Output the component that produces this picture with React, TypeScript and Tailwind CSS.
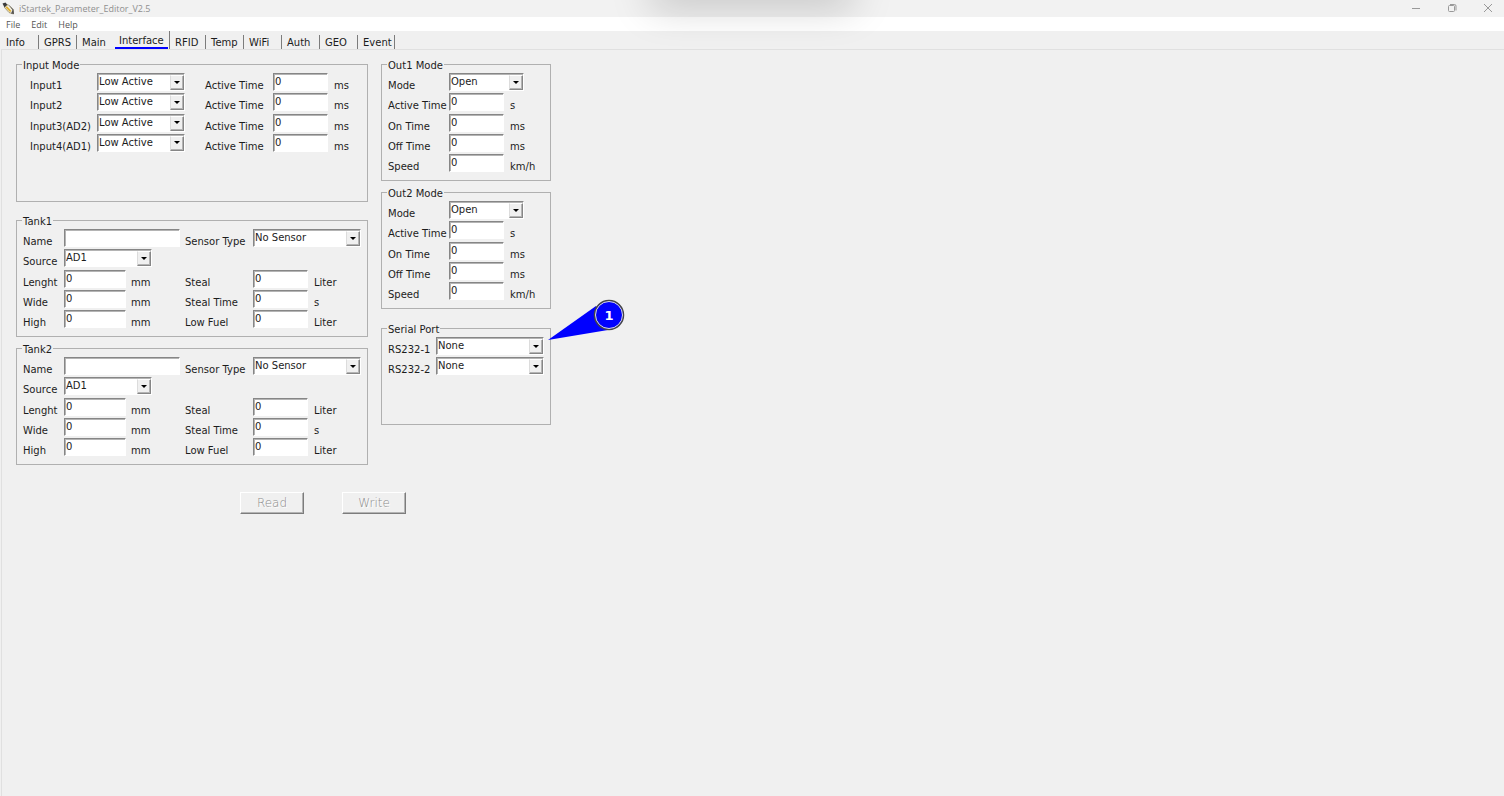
import type { ReactNode } from "react";

const TABS = [
  { label: "Info", width: "w-[38px]" },
  { label: "GPRS", width: "w-[38px]" },
  { label: "Main", width: "w-[38px]" },
  { label: "Interface", width: "w-[55px]" },
  { label: "RFID", width: "w-[36px]" },
  { label: "Temp", width: "w-[38px]" },
  { label: "WiFi", width: "w-[38px]" },
  { label: "Auth", width: "w-[38px]" },
  { label: "GEO", width: "w-[38px]" },
  { label: "Event", width: "w-[37px]" },
];

const INPUTS = ["Input1", "Input2", "Input3(AD2)", "Input4(AD1)"];

const OUT_FIELDS = [
  { label: "Active Time", unit: "s" },
  { label: "On Time", unit: "ms" },
  { label: "Off Time", unit: "ms" },
  { label: "Speed", unit: "km/h" },
];

const TANK_FIELDS = [
  { left: "Lenght", right: "Steal", unit: "Liter" },
  { left: "Wide", right: "Steal Time", unit: "s" },
  { left: "High", right: "Low Fuel", unit: "Liter" },
];

function Label({ htmlFor, children }: { htmlFor?: string; children: ReactNode }) {
  return (
    <label htmlFor={htmlFor} className="mt-1 h-[18px] leading-[18px] whitespace-nowrap">
      {children}
    </label>
  );
}

function Unit({ children }: { children: ReactNode }) {
  return <span className="mt-1 h-[18px] leading-[18px]">{children}</span>;
}

function TextBox({ id, width, value = "0" }: { id: string; width: string; value?: string }) {
  return (
    <input
      id={id}
      defaultValue={value}
      className={`${width} block h-[18px] border border-t-[#868686] border-r-white border-b-white border-l-[#868686] bg-white pb-px pl-px leading-[14px] shadow-[inset_1px_1px_0_#b4b4b4] outline-none`}
    />
  );
}

function Select({ id, width, options }: { id: string; width: string; options: string[] }) {
  return (
    <span className={`${width} relative block h-[18px]`}>
      <select
        id={id}
        className="block h-[18px] w-full appearance-none rounded-none border border-t-[#868686] border-r-white border-b-white border-l-[#868686] bg-white pb-0 pl-px leading-[14px] shadow-[inset_1px_1px_0_#b4b4b4] outline-none"
      >
        {options.map((option) => (
          <option key={option}>{option}</option>
        ))}
      </select>
      <span className="pointer-events-none absolute top-0.5 right-px bottom-px flex w-[14px] items-center justify-center border border-t-white border-r-[#868686] border-b-[#868686] border-l-[#dcdcdc] bg-[#f0f0f0] pb-px shadow-[inset_-1px_-1px_0_#b4b4b4]">
        <svg width="6" height="3" viewBox="0 0 6 3">
          <path d="M0 0h6L3 3z" fill="#000" />
        </svg>
      </span>
    </span>
  );
}

function Group({ title, height, children }: { title: string; height: string; children: ReactNode }) {
  return (
    <fieldset className={`${height} relative min-w-0 border border-[#b0b0b0] pt-[3px]`}>
      <legend className="ml-[5px] h-3 px-px leading-[15px]">{title}</legend>
      {children}
    </fieldset>
  );
}

function Tank({ title }: { title: string }) {
  const row = "grid h-[18px] grid-cols-[41px_67px_54px_68px_61px_auto]";
  return (
    <Group title={title} height="h-[123px]">
      <div className="flex h-[99px] flex-col justify-between pl-1.5">
        <div className={row}>
          <Label htmlFor={`${title}-name`}>Name</Label>
          <div className="col-span-2">
            <TextBox id={`${title}-name`} width="w-[116px]" value="" />
          </div>
          <Label htmlFor={`${title}-sensor`}>Sensor Type</Label>
          <div className="col-span-2">
            <Select id={`${title}-sensor`} width="w-[108px]" options={["No Sensor"]} />
          </div>
        </div>
        <div className={row}>
          <Label htmlFor={`${title}-source`}>Source</Label>
          <div className="col-span-2">
            <Select id={`${title}-source`} width="w-[88px]" options={["AD1", "AD2"]} />
          </div>
        </div>
        {TANK_FIELDS.map((field) => (
          <div key={field.left} className={row}>
            <Label htmlFor={`${title}-${field.left}`}>{field.left}</Label>
            <TextBox id={`${title}-${field.left}`} width="w-[62px]" />
            <Unit>mm</Unit>
            <Label htmlFor={`${title}-${field.right}`}>{field.right}</Label>
            <TextBox id={`${title}-${field.right}`} width="w-[55px]" />
            <Unit>{field.unit}</Unit>
          </div>
        ))}
      </div>
    </Group>
  );
}

function Output({ title }: { title: string }) {
  return (
    <Group title={title} height="h-[123px]">
      <div className="flex h-[99px] flex-col justify-between pl-1.5">
        <div className="grid h-[18px] grid-cols-[61px_auto]">
          <Label htmlFor={`${title}-mode`}>Mode</Label>
          <Select id={`${title}-mode`} width="w-[75px]" options={["Open", "Close"]} />
        </div>
        {OUT_FIELDS.map((field) => (
          <div key={field.label} className="grid h-[18px] grid-cols-[61px_61px_auto]">
            <Label htmlFor={`${title}-${field.label}`}>{field.label}</Label>
            <TextBox id={`${title}-${field.label}`} width="w-[55px]" />
            <Unit>{field.unit}</Unit>
          </div>
        ))}
      </div>
    </Group>
  );
}

function Callout() {
  return (
    <svg className="pointer-events-none absolute -top-9 left-[165px]" width="80" height="46" viewBox="0 0 80 46">
      <path d="M1 42 49 8l12 24z" fill="#00f" />
      <circle cx="62" cy="17" r="14.500" fill="#00f" stroke="#444" strokeWidth="1.5" />
      <circle cx="62" cy="17" r="13.500" fill="none" stroke="#ddd" strokeWidth="1" />
      <text x="62" y="22" textAnchor="middle" fill="#fff" fontFamily="DejaVu Sans, sans-serif" fontSize="13" fontWeight="700">
        1
      </text>
    </svg>
  );
}

function AppIcon() {
  return (
    <svg width="13" height="13" viewBox="0 0 13 13" aria-hidden="true">
      <path d="M.5 1.500 3.500.5 5.500 3 2.500 5.500z" fill="#3a3a3a" />
      <path d="M2.500 5.500 6 2.500 11 7.500 11.500 12 7 10.500z" fill="#f3efe2" stroke="#8a7a4a" strokeWidth=".7" />
      <path d="M3.500 5.500 5 4.300 9.500 9 8 10z" fill="#e0b030" />
      <path d="M6.500 2.500 11.500 7.500 12 12 9 11.500 10.500 8z" fill="#555" />
    </svg>
  );
}

function TitleBar() {
  return (
    <header className="flex h-[17px] items-center bg-[#f2f2f2] pl-0.5 font-['Open_Sans',sans-serif] text-[9px] text-[#8f8f8f]">
      <AppIcon />
      <h1 className="ml-1 flex-1">iStartek_Parameter_Editor_V2.5</h1>
      <div className="flex h-full items-center gap-6 pr-[10px] pb-0.5">
        <button aria-label="Minimize" className="flex w-3 justify-center">
          <svg width="10" height="10" viewBox="0 0 10 10" fill="none" stroke="#999">
            <path d="M1 5.500h8" />
          </svg>
        </button>
        <button aria-label="Restore" className="flex w-3 justify-center">
          <svg width="10" height="10" viewBox="0 0 10 10" fill="none" stroke="#999">
            <rect x="1.5" y="2.5" width="6" height="6" rx="1" />
            <path d="M3 1.500h4.500a1.500 1.500 0 0 1 1.500 1.500v4.500" />
          </svg>
        </button>
        <button aria-label="Close" className="flex w-3 justify-center">
          <svg width="10" height="10" viewBox="0 0 10 10" fill="none" stroke="#999">
            <path d="m1 1 8 8M9 1 1 9" />
          </svg>
        </button>
      </div>
    </header>
  );
}

export default function App() {
  return (
    <div className="relative flex min-h-screen flex-col overflow-hidden bg-[#f0f0f0] font-['DejaVu_Sans',sans-serif] text-[10px] text-[#1c1c1c]">
      <TitleBar />
      <nav className="flex h-[14px] items-center gap-[11px] bg-white pt-0.5 pl-1.5 font-['Open_Sans',sans-serif] text-[9px] text-[#555]">
        <button>File</button>
        <button>Edit</button>
        <button>Help</button>
      </nav>
      <div className="pointer-events-none absolute -top-5 left-1/2 h-5 w-[190px] -translate-x-1/2 shadow-[0_0_40px_6px_rgba(0,0,0,0.22)]" />

      <div role="tablist" className="flex h-[18px] items-end pl-px">
        {TABS.map((tab) =>
          tab.label === "Interface" ? (
            <button
              key={tab.label}
              role="tab"
              aria-selected
              className={`${tab.width} h-[18px] border-r border-r-[#7c7c7c] pr-px text-left leading-[12px]`}
            >
              <span className="block border-b-2 border-[#00f] pt-1 pl-1">{tab.label}</span>
            </button>
          ) : (
            <button
              key={tab.label}
              role="tab"
              aria-selected={false}
              className={`${tab.width} ${tab.label === "Main" ? "border-r-transparent" : "border-r-[#7c7c7c]"} h-[14px] border-r pl-[5px] text-left leading-[16px]`}
            >
              {tab.label}
            </button>
          ),
        )}
      </div>

      <main className="ml-px flex-1 border-t border-l border-[#e0e0e0] pt-2 pl-[14px]">
        <div className="flex items-start gap-[13px]">
          <div className="w-[352px]">
            <Group title="Input Mode" height="h-[144px]">
              <div className="flex h-[79px] flex-col justify-between pl-[13px]">
                {INPUTS.map((name) => (
                  <div key={name} className="grid h-[18px] grid-cols-[67px_108px_68px_61px_auto]">
                    <Label htmlFor={name}>{name}</Label>
                    <Select id={name} width="w-[88px]" options={["Low Active", "High Active"]} />
                    <Label htmlFor={`${name}-time`}>Active Time</Label>
                    <TextBox id={`${name}-time`} width="w-[55px]" />
                    <Unit>ms</Unit>
                  </div>
                ))}
              </div>
            </Group>
            <div className="mt-3 flex flex-col gap-[5px]">
              <Tank title="Tank1" />
              <Tank title="Tank2" />
            </div>
          </div>

          <div className="w-[170px]">
            <div className="flex flex-col gap-[5px]">
              <Output title="Out1 Mode" />
              <Output title="Out2 Mode" />
            </div>
            <div className="mt-[13px]">
              <Group title="Serial Port" height="h-[103px]">
                <div className="flex h-[38px] flex-col justify-between pl-1.5">
                  {["RS232-1", "RS232-2"].map((port) => (
                    <div key={port} className="grid h-[18px] grid-cols-[48px_auto]">
                      <Label htmlFor={port}>{port}</Label>
                      <Select id={port} width="w-[108px]" options={["None"]} />
                    </div>
                  ))}
                </div>
                <Callout />
              </Group>
            </div>
          </div>
        </div>

        <div className="mt-[27px] flex gap-[38px] pl-[224px]">
          {["Read", "Write"].map((action) => (
            <button
              key={action}
              disabled
              className="h-[22px] w-[64px] border border-t-white border-r-[#7c7c7c] border-b-[#7c7c7c] border-l-white text-[12px] font-extralight text-[#8c8c8c] shadow-[inset_-1px_-1px_0_#b4b4b4] [text-shadow:1px_1px_0_#fff]"
            >
              {action}
            </button>
          ))}
        </div>
      </main>
    </div>
  );
}
